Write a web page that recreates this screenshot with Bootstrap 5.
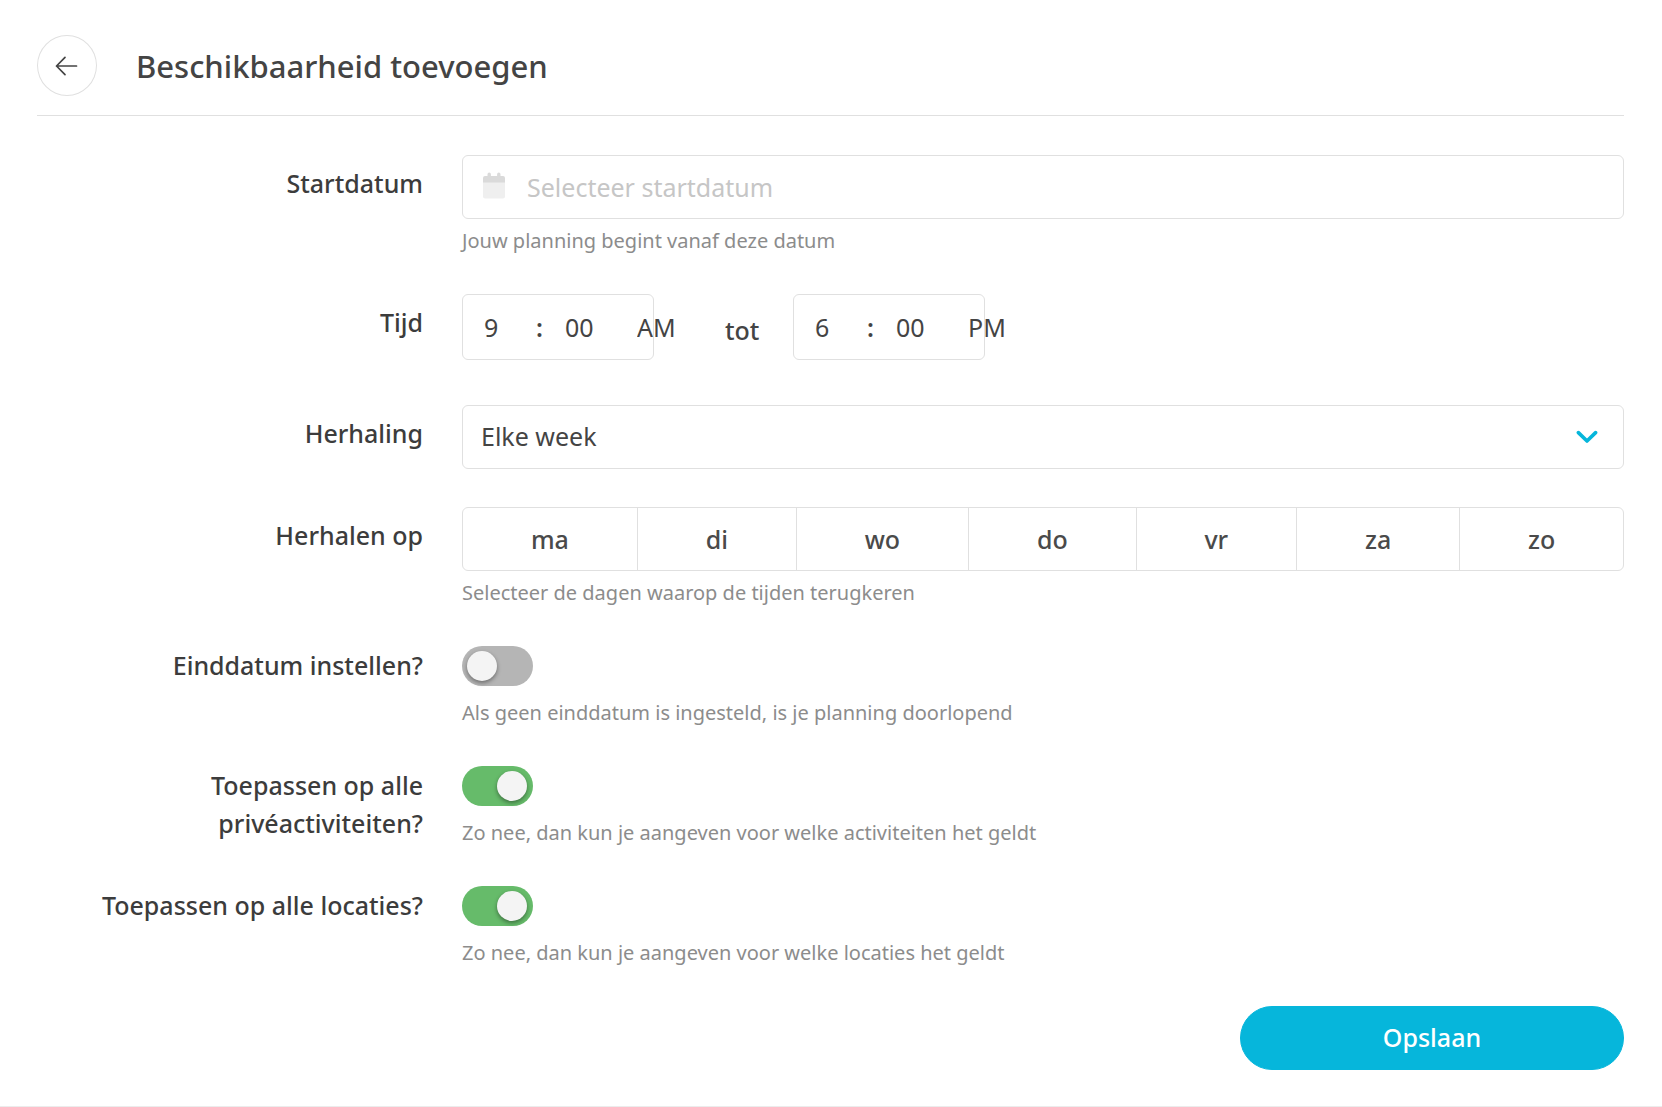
<!DOCTYPE html>
<html lang="nl">
<head>
<meta charset="utf-8">
<meta name="viewport" content="width=device-width, initial-scale=1">
<title>Beschikbaarheid toevoegen</title>
<link href="https://cdn.jsdelivr.net/npm/bootstrap@5.3.0/dist/css/bootstrap.min.css" rel="stylesheet">
<style>
  :root {
    --ink: #444;
    --hint: #8c8c8c;
    --line: #e0e0e0;
    --accent: #06b6db;
    --on: #66bb6a;
  }
  body {
    font-family: "Noto Sans", "Open Sans", sans-serif;
    font-size: 25px;
    line-height: 38px;
    color: var(--ink);
    background: #fff;
  }
  .page-shell { padding: 35px 38px 35px 37px; border-bottom: 1px solid #ececec; }
  .page-head { gap: 39px; padding-bottom: 19px; margin-bottom: 39px; border-bottom: 1px solid var(--line); }
  .page-title { font-size: 31px; line-height: 40px; font-weight: 500; }
  .btn-back { width: 60px; height: 61px; border: 1px solid var(--line); border-radius: 50%; color: #444; }
  .form-stack { gap: 38px; }
  .field-row { gap: 0 39px; }
  .field-label { width: 386px; padding-top: 9px; font-weight: 500; color: #3c3c3c; }
  .field-label.for-switch { padding-top: 0; }
  .field-body { flex: 1 1 0; min-width: 0; }
  .field-hint { margin-top: 7px; padding-bottom: 1px; font-size: 20px; line-height: 29px; color: var(--hint); }
  .for-switch + .field-body .field-hint { margin-top: 12px; }

  .form-control.tall, .form-select.tall {
    height: 64px;
    font-size: 25px;
    color: var(--ink);
    border-color: var(--line);
    border-radius: 6px;
    background-color: #fff;
  }
  .form-control.tall { padding-left: 64px; }
  .form-control.tall::placeholder { color: #c6c6c6; }
  .icon-cal { left: 20px; top: 17px; pointer-events: none; }
  .form-select.tall {
    padding: 0 60px 0 18px;
    background-image: url("data:image/svg+xml,%3Csvg xmlns='http://www.w3.org/2000/svg' viewBox='0 0 22 14'%3E%3Cpath d='M2.4 2.600 11 11l8.600-8.400' fill='none' stroke='%2306b6db' stroke-width='3.600' stroke-linecap='round' stroke-linejoin='round'/%3E%3C/svg%3E");
    background-size: 22px 14px;
    background-position: right 25px center;
  }

  .time-row { height: 73px; }
  .time-box { width: 192px; height: 66px; padding-left: 21px; border: 1px solid var(--line); border-radius: 6px; }
  .time-box input { flex: none; padding: 0; border: 0; background: none; color: var(--ink); }
  .time-box .hour { width: 52px; }
  .time-box .minute { width: 72px; }
  .time-box .meridiem { width: 50px; }
  .time-colon { flex: none; width: 29px; font-weight: 600; }
  .time-until { width: 139px; padding: 17px 0 0 71px; font-weight: 500; }

  .day-group .btn {
    height: 64px;
    padding: 0 12px;
    font-size: 25px;
    line-height: 62px;
    font-weight: 500;
    --bs-btn-color: #4a4a4a;
    --bs-btn-border-color: var(--line);
    --bs-btn-hover-border-color: var(--line);
    --bs-btn-active-bg: var(--accent);
    --bs-btn-active-color: #fff;
    --bs-btn-border-radius: 6px;
  }

  .form-switch.pill { height: 40px; min-height: 0; margin: 0; padding: 0; }
  .form-switch.pill .form-check-input {
    display: flex;
    align-items: center;
    float: none;
    width: 71px;
    height: 40px;
    margin: 0;
    padding: 0 6px 0 5px;
    border: 0;
    border-radius: 20px;
    background: #b5b5b5;
  }
  .form-switch.pill .form-check-input::before {
    content: "";
    width: 30px;
    height: 30px;
    border-radius: 50%;
    background: #f4f4f4;
    box-shadow: 0 2px 4px rgba(0, 0, 0, .4);
  }
  .form-switch.pill .form-check-input:checked { justify-content: flex-end; background: var(--on); }

  .btn-save {
    width: 384px;
    height: 64px;
    font-size: 25px;
    font-weight: 500;
    --bs-btn-color: #fff;
    --bs-btn-bg: var(--accent);
    --bs-btn-border-color: var(--accent);
    --bs-btn-hover-color: #fff;
    --bs-btn-hover-bg: #05a3c4;
  }
  @media (max-width: 991px) {
    .field-row { flex-direction: column; }
    .field-label { width: auto; padding-top: 0; text-align: left !important; }
    .btn-save { width: 100%; }
  }
</style>
<script src="https://cdn.jsdelivr.net/npm/bootstrap@5.3.0/dist/js/bootstrap.bundle.min.js"></script>
</head>
<body>
<main class="page-shell min-vh-100">
  <header class="page-head d-flex align-items-center">
    <button type="button" class="btn btn-back d-flex align-items-center justify-content-center p-0" aria-label="Terug">
      <svg width="24" height="24" viewBox="0 0 24 24" fill="none" stroke="currentColor" stroke-width="1.700" stroke-linecap="round" stroke-linejoin="round" aria-hidden="true"><path d="M21.500 12H1.500M10 3.300 1.500 12l8.500 8.700"/></svg>
    </button>
    <h1 class="page-title mb-0">Beschikbaarheid toevoegen</h1>
  </header>

  <form class="form-stack d-flex flex-column">
    <div class="field-row d-flex">
      <label class="field-label text-end" for="start">Startdatum</label>
      <div class="field-body">
        <div class="position-relative">
          <svg class="icon-cal position-absolute" width="24" height="28" viewBox="0 0 24 28" aria-hidden="true">
            <path d="M1 10h22v14.500a2 2 0 0 1-2 2H3a2 2 0 0 1-2-2z" fill="#efefef"/>
            <path d="M1 10.500V6a2 2 0 0 1 2-2h2.500V2.200a1.700 1.700 0 0 1 3.400 0V4h6.200V2.200a1.700 1.700 0 0 1 3.400 0V4H21a2 2 0 0 1 2 2v4.500z" fill="#dadada"/>
          </svg>
          <input type="text" class="form-control tall" id="start" placeholder="Selecteer startdatum">
        </div>
        <div class="field-hint">Jouw planning begint vanaf deze datum</div>
      </div>
    </div>

    <div class="field-row d-flex">
      <label class="field-label text-end" for="from-hour">Tijd</label>
      <div class="field-body time-row d-flex align-items-start">
        <div class="time-box d-flex align-items-center">
          <input class="hour" id="from-hour" type="text" value="9" aria-label="Beginuur">
          <span class="time-colon">:</span>
          <input class="minute" type="text" value="00" aria-label="Beginminuut">
          <input class="meridiem" type="text" value="AM" aria-label="AM of PM, begin">
        </div>
        <div class="time-until">tot</div>
        <div class="time-box d-flex align-items-center">
          <input class="hour" type="text" value="6" aria-label="Einduur">
          <span class="time-colon">:</span>
          <input class="minute" type="text" value="00" aria-label="Eindminuut">
          <input class="meridiem" type="text" value="PM" aria-label="AM of PM, einde">
        </div>
      </div>
    </div>

    <div class="field-row d-flex">
      <label class="field-label text-end" for="repeat">Herhaling</label>
      <div class="field-body">
        <select class="form-select tall" id="repeat">
          <option selected>Elke week</option>
        </select>
      </div>
    </div>

    <div class="field-row d-flex">
      <div class="field-label text-end" id="days-label">Herhalen op</div>
      <div class="field-body">
        <div class="btn-group day-group d-flex" role="group" aria-labelledby="days-label">
          <input type="checkbox" class="btn-check" id="d-ma"><label class="btn" for="d-ma">ma</label>
          <input type="checkbox" class="btn-check" id="d-di"><label class="btn" for="d-di">di</label>
          <input type="checkbox" class="btn-check" id="d-wo"><label class="btn" for="d-wo">wo</label>
          <input type="checkbox" class="btn-check" id="d-do"><label class="btn" for="d-do">do</label>
          <input type="checkbox" class="btn-check" id="d-vr"><label class="btn" for="d-vr">vr</label>
          <input type="checkbox" class="btn-check" id="d-za"><label class="btn" for="d-za">za</label>
          <input type="checkbox" class="btn-check" id="d-zo"><label class="btn" for="d-zo">zo</label>
        </div>
        <div class="field-hint">Selecteer de dagen waarop de tijden terugkeren</div>
      </div>
    </div>

    <div class="field-row d-flex">
      <label class="field-label for-switch text-end" for="set-end">Einddatum instellen?</label>
      <div class="field-body">
        <div class="form-check form-switch pill"><input class="form-check-input" type="checkbox" role="switch" id="set-end"></div>
        <div class="field-hint">Als geen einddatum is ingesteld, is je planning doorlopend</div>
      </div>
    </div>

    <div class="field-row d-flex">
      <label class="field-label for-switch text-end" for="all-act">Toepassen op alle privéactiviteiten?</label>
      <div class="field-body">
        <div class="form-check form-switch pill"><input class="form-check-input" type="checkbox" role="switch" id="all-act" checked></div>
        <div class="field-hint">Zo nee, dan kun je aangeven voor welke activiteiten het geldt</div>
      </div>
    </div>

    <div class="field-row d-flex">
      <label class="field-label for-switch text-end" for="all-loc">Toepassen op alle locaties?</label>
      <div class="field-body">
        <div class="form-check form-switch pill"><input class="form-check-input" type="checkbox" role="switch" id="all-loc" checked></div>
        <div class="field-hint">Zo nee, dan kun je aangeven voor welke locaties het geldt</div>
      </div>
    </div>

    <div class="d-flex justify-content-end">
      <button type="submit" class="btn btn-save rounded-pill">Opslaan</button>
    </div>
  </form>
</main>
</body>
</html>
